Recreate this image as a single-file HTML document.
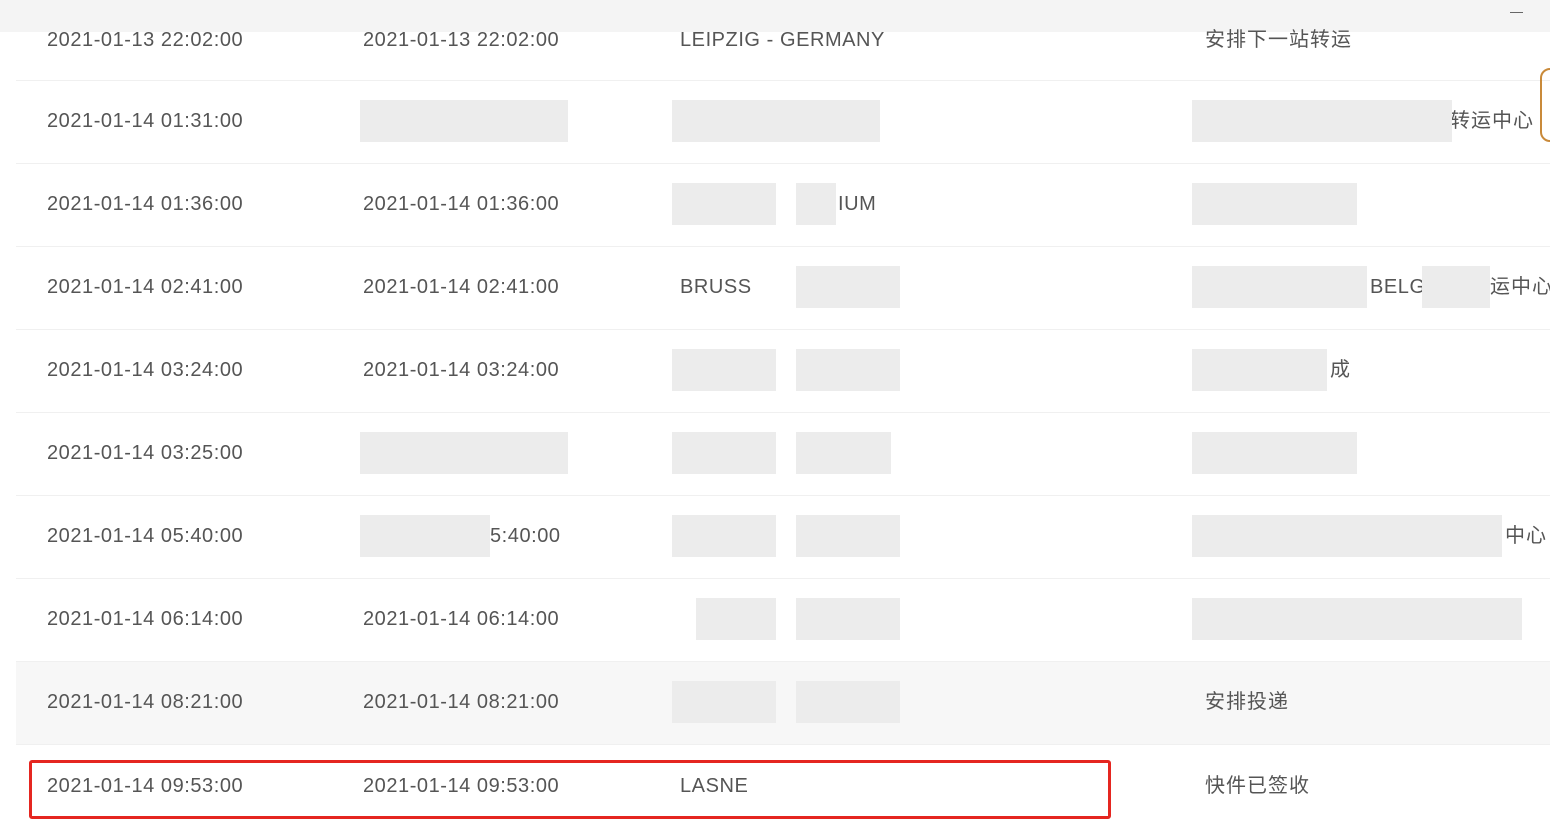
<!DOCTYPE html>
<html><head><meta charset="utf-8"><style>
body{margin:0;width:1550px;height:821px;background:#fff;position:relative;overflow:hidden;font-family:"Liberation Sans","Noto Sans CJK SC",sans-serif;color:#555;font-size:20px}
.t{position:absolute;line-height:24px;white-space:nowrap;letter-spacing:0.55px}
.c{letter-spacing:1px}
.l{position:absolute;left:16px;right:0;height:1px;background:#f0f0f0}
.b{position:absolute;background:#ececec}
</style></head><body>
<div style="position:absolute;left:0;top:0;width:1550px;height:32px;background:#f4f4f4"></div>
<div style="position:absolute;left:1510px;top:12px;width:13px;height:1px;background:#666"></div>
<div style="position:absolute;left:16px;right:0;top:661px;height:83px;background:#f7f7f7"></div>
<div class="l" style="top:80px"></div><div class="l" style="top:163px"></div><div class="l" style="top:246px"></div><div class="l" style="top:329px"></div><div class="l" style="top:412px"></div><div class="l" style="top:495px"></div><div class="l" style="top:578px"></div><div class="l" style="top:661px"></div><div class="l" style="top:744px"></div>

<div class="t" style="left:47px;top:28px">2021-01-13 22:02:00</div>
<div class="t" style="left:363px;top:28px">2021-01-13 22:02:00</div>
<div class="t" style="left:680px;top:28px">LEIPZIG - GERMANY</div>
<div class="t c" style="left:1205px;top:28px">安排下一站转运</div>

<div class="t" style="left:47px;top:109px">2021-01-14 01:31:00</div>
<div class="t" style="left:47px;top:192px">2021-01-14 01:36:00</div>
<div class="t" style="left:363px;top:192px">2021-01-14 01:36:00</div>
<div class="t" style="left:838px;top:192px">IUM</div>
<div class="t" style="left:47px;top:275px">2021-01-14 02:41:00</div>
<div class="t" style="left:363px;top:275px">2021-01-14 02:41:00</div>
<div class="t" style="left:680px;top:275px">BRUSS</div>
<div class="t" style="left:1370px;top:275px">BELG</div>
<div class="t c" style="left:1490px;top:275px">运中心</div>
<div class="t c" style="left:1450px;top:109px">转运中心</div>
<div class="t" style="left:47px;top:358px">2021-01-14 03:24:00</div>
<div class="t" style="left:363px;top:358px">2021-01-14 03:24:00</div>
<div class="t c" style="left:1330px;top:358px">成</div>
<div class="t" style="left:47px;top:441px">2021-01-14 03:25:00</div>
<div class="t" style="left:47px;top:524px">2021-01-14 05:40:00</div>
<div class="t" style="left:490px;top:524px">5:40:00</div>
<div class="t c" style="left:1505px;top:524px">中心</div>
<div class="t" style="left:47px;top:607px">2021-01-14 06:14:00</div>
<div class="t" style="left:363px;top:607px">2021-01-14 06:14:00</div>
<div class="t" style="left:47px;top:690px">2021-01-14 08:21:00</div>
<div class="t" style="left:363px;top:690px">2021-01-14 08:21:00</div>
<div class="t c" style="left:1205px;top:690px">安排投递</div>
<div class="t" style="left:47px;top:774px">2021-01-14 09:53:00</div>
<div class="t" style="left:363px;top:774px">2021-01-14 09:53:00</div>
<div class="t" style="left:680px;top:774px">LASNE</div>
<div class="t c" style="left:1205px;top:774px">快件已签收</div>

<div class="b" style="left:360px;top:100px;width:208px;height:42px"></div>
<div class="b" style="left:672px;top:100px;width:208px;height:42px"></div>
<div class="b" style="left:1192px;top:100px;width:260px;height:42px"></div>
<div class="b" style="left:672px;top:183px;width:104px;height:42px"></div>
<div class="b" style="left:796px;top:183px;width:40px;height:42px"></div>
<div class="b" style="left:1192px;top:183px;width:165px;height:42px"></div>
<div class="b" style="left:796px;top:266px;width:104px;height:42px"></div>
<div class="b" style="left:1192px;top:266px;width:175px;height:42px"></div>
<div class="b" style="left:1422px;top:266px;width:68px;height:42px"></div>
<div class="b" style="left:672px;top:349px;width:104px;height:42px"></div>
<div class="b" style="left:796px;top:349px;width:104px;height:42px"></div>
<div class="b" style="left:1192px;top:349px;width:135px;height:42px"></div>
<div class="b" style="left:360px;top:432px;width:208px;height:42px"></div>
<div class="b" style="left:672px;top:432px;width:104px;height:42px"></div>
<div class="b" style="left:796px;top:432px;width:95px;height:42px"></div>
<div class="b" style="left:1192px;top:432px;width:165px;height:42px"></div>
<div class="b" style="left:360px;top:515px;width:130px;height:42px"></div>
<div class="b" style="left:672px;top:515px;width:104px;height:42px"></div>
<div class="b" style="left:796px;top:515px;width:104px;height:42px"></div>
<div class="b" style="left:1192px;top:515px;width:310px;height:42px"></div>
<div class="b" style="left:696px;top:598px;width:80px;height:42px"></div>
<div class="b" style="left:796px;top:598px;width:104px;height:42px"></div>
<div class="b" style="left:1192px;top:598px;width:330px;height:42px"></div>
<div class="b" style="left:672px;top:681px;width:104px;height:42px"></div>
<div class="b" style="left:796px;top:681px;width:104px;height:42px"></div>

<div style="position:absolute;left:1540px;top:68px;width:20px;height:70px;border:2px solid #c98a3a;border-radius:10px"></div>
<div style="position:absolute;left:29px;top:760px;width:1076px;height:53px;border:3px solid #e52620;border-radius:3px"></div>
</body></html>
